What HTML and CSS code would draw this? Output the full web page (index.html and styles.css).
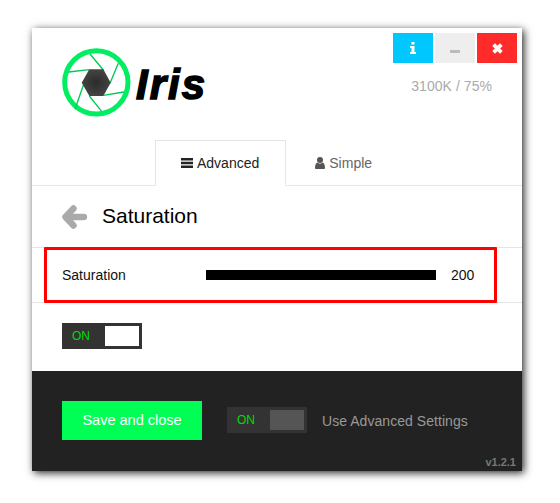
FILE: index.html
```html
<!DOCTYPE html>
<html lang="en">
<head>
    <meta charset="UTF-8">
    <title>Iris</title>
    <link rel="stylesheet" href="styles.css">
</head>
<body>
    <div class="window">
        <div class="header">
            <div class="logo">
                <svg class="logo-mark" viewBox="120 78 222 216">
                    <defs>
                        <radialGradient id="hex">
                            <stop offset="0" stop-color="#2b2b2b"/>
                            <stop offset="1" stop-color="#444"/>
                        </radialGradient>
                    </defs>
                    <circle cx="229" cy="187" r="95" fill="#fff" stroke="#00ee60" stroke-width="15"/>
                    <g stroke="#00c850" stroke-width="4" fill="none">
                        <path d="M210 102L250 150"/>
                        <path d="M295 130L270 190"/>
                        <path d="M312 216L250 226"/>
                        <path d="M245 274L208 228"/>
                        <path d="M165 268L190 196"/>
                        <path d="M146 156L208 149"/>
                    </g>
                    <path d="M185 188L208 148H250L272 188L250 228H208Z" fill="url(#hex)"/>
                </svg>
                <span class="logo-text">Iris</span>
            </div>
            <div class="header-right">
                <div class="win-buttons">
                    <div class="win-btn info">
                        <svg width="6" height="12" viewBox="0 0 6 12"><path d="M1.500 0H4.500V2.500H1.500ZM0 4H4.500V10H6V12H0V10H1.500V6H0Z" fill="#fff"/></svg>
                    </div>
                    <div class="win-btn minimize">
                        <svg width="10" height="3" viewBox="0 0 10 3"><rect width="10" height="3" fill="#bbb"/></svg>
                    </div>
                    <div class="win-btn close">
                        <svg width="11" height="11" viewBox="0 0 10 10"><path d="M1.500 1.500L8.500 8.500M8.500 1.500L1.500 8.500" stroke="#fff" stroke-width="3.400" fill="none"/></svg>
                    </div>
                </div>
                <div class="status">3100K / 75%</div>
            </div>
        </div>

        <div class="tabs">
            <div class="tab active">
                <svg width="12" height="10" viewBox="0 0 12 10"><path d="M0 0H12V2.400H0ZM0 3.800H12V6.200H0ZM0 7.600H12V10H0Z" fill="#222"/></svg>
                Advanced
            </div>
            <div class="tab simple">
                <svg width="10" height="12" viewBox="0 0 10 12"><circle cx="5" cy="3" r="3" fill="#555"/><path d="M0 11C0 7.500 1 6 2.500 5.500C4 7 6 7 7.500 5.500C9 6 10 7.500 10 11C10 11.600 9.500 12 9 12H1C.5 12 0 11.600 0 11Z" fill="#555"/></svg>
                Simple
            </div>
        </div>

        <div class="main">
            <div class="title-row">
                <svg width="25" height="24" viewBox="0 0 25 24"><path d="M11.500 3.500L3.500 12L11.500 20.500M4 12H22" stroke="#aaa" stroke-width="6.500" stroke-linecap="round" stroke-linejoin="round" fill="none"/></svg>
                <h1>Saturation</h1>
            </div>

            <div class="setting-row">
                <span class="setting-label">Saturation</span>
                <div class="bar"></div>
                <span class="setting-value">200</span>
                <div class="highlight"></div>
            </div>

            <div class="toggle-row">
                <div class="toggle">
                    <span>ON</span>
                    <div class="knob"></div>
                </div>
            </div>
        </div>

        <div class="footer">
            <div class="save">Save and close</div>
            <div class="toggle toggle-dark">
                <span>ON</span>
                <div class="knob"></div>
            </div>
            <span class="footer-label">Use Advanced Settings</span>
            <span class="version">v1.2.1</span>
        </div>
    </div>
</body>
</html>
```

FILE: styles.css
```css
*{
    margin: 0;
    padding: 0;
    box-sizing: border-box;
}
body{
    padding: 28px 0 32px 32px;
    background-color: white;
    font-family: "Liberation Sans", Arial, sans-serif;
    font-size: 14px;
}
svg{
    display: block;
}
.window{
    width: 490px;
    height: 443px;
    display: flex;
    flex-direction: column;
    background-color: white;
    box-shadow: 2px 2px 8px rgba(0,0,0,.85);
}
.header{
    height: 112px;
    display: flex;
    justify-content: space-between;
}
.logo{
    display: flex;
    align-items: center;
    height: 72px;
    margin: 18px 0 0 28px;
}
.logo-mark{
    width: 74px;
    height: 72px;
}
.logo-text{
    margin: 6px 0 0 2px;
    font-size: 42px;
    font-weight: bold;
    font-style: italic;
    letter-spacing: 2px;
    color: black;
    -webkit-text-stroke: 1.5px black;
}
.header-right{
    display: flex;
    flex-direction: column;
    align-items: flex-end;
    padding: 5px 5px 0 0;
}
.win-buttons{
    display: flex;
    gap: 2px;
}
.win-btn{
    width: 40px;
    height: 30px;
    display: flex;
    justify-content: center;
    align-items: center;
}
.info{
    background-color: #00c8ff;
}
.minimize{
    background-color: #eee;
    padding-top: 7px;
}
.close{
    background-color: #ff2a2a;
}
.status{
    margin: 15px 25px 0 0;
    line-height: 16px;
    letter-spacing: .05px;
    color: #aaa;
}
.tabs{
    height: 46px;
    display: flex;
    padding-left: 123px;
    border-bottom: 1px solid #e5e5e5;
}
.tab{
    height: 46px;
    display: flex;
    align-items: center;
    gap: 4px;
    padding: 0 25px;
    border: 1px solid transparent;
}
.active{
    padding-right: 26px;
    color: #222;
    background-color: white;
    border-color: #e5e5e5;
    border-bottom-color: white;
}
.simple{
    margin-left: 3px;
    color: #666;
}
.main{
    flex: 1;
}
.title-row{
    height: 61px;
    display: flex;
    align-items: center;
    gap: 15px;
    padding-left: 30px;
}
h1{
    margin-bottom: 2px;
    font-size: 21px;
    font-weight: normal;
    color: black;
}
.setting-row{
    position: relative;
    height: 56px;
    display: flex;
    align-items: center;
    padding-left: 30px;
    border-top: 1px solid #e5e5e5;
    border-bottom: 1px solid #e5e5e5;
    color: #111;
}
.setting-label{
    width: 144px;
}
.bar{
    width: 230px;
    height: 10px;
    background-color: black;
}
.setting-value{
    margin-left: 15px;
}
.highlight{
    position: absolute;
    left: 12px;
    right: 25px;
    top: -1px;
    bottom: -1px;
    border: 3px solid #ff0000;
    border-radius: 1px;
}
.toggle-row{
    padding: 20px 0 0 30px;
}
.toggle{
    width: 80px;
    height: 26px;
    display: flex;
    justify-content: space-between;
    align-items: center;
    padding: 3px;
    background-color: #333;
}
.toggle span{
    padding-left: 7px;
    font-size: 12px;
    color: #00dd00;
}
.knob{
    width: 34px;
    height: 20px;
    background-color: white;
}
.toggle-dark .knob{
    background-color: #555;
}
.footer{
    position: relative;
    height: 100px;
    display: flex;
    align-items: center;
    padding: 0 0 2px 30px;
    background-color: #222;
}
.save{
    width: 140px;
    height: 39px;
    line-height: 39px;
    margin-right: 25px;
    text-align: center;
    font-size: 14.5px;
    color: white;
    background-color: #00ff55;
}
.footer-label{
    margin: 2px 0 0 15px;
    letter-spacing: .05px;
    color: #999;
}
.version{
    position: absolute;
    right: 6px;
    bottom: 3px;
    font-size: 11px;
    font-weight: bold;
    color: #777;
}
```
